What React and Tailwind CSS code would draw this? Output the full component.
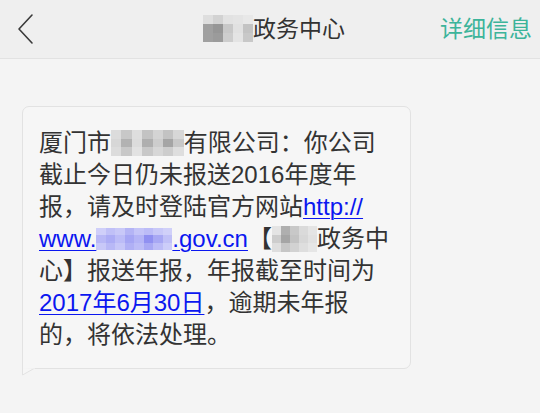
import React from "react";

const FONT = { fontFamily: '"Liberation Sans", "Noto Sans CJK SC", sans-serif' };

// pixelated blur blocks, the redacted parts of the message
function Mosaic({ cols, cell, colors, className = "" }) {
  return (
    <span
      className={`inline-grid align-middle ${className}`}
      style={{ gridTemplateColumns: `repeat(${cols}, ${cell[0]}px)`, gridAutoRows: `${cell[1]}px` }}
    >
      {colors.map((c, i) => (
        <span key={i} style={{ background: c }} />
      ))}
    </span>
  );
}

const g = (v) => `rgb(${v},${v},${v})`;

const titleBlur = [
  g(222), g(210), g(226), g(228), g(232),
  g(160), g(150), g(200), g(225), g(195),
  g(160), g(155), g(205), g(228), g(200),
];

const companyBlur = [
  g(220), g(200), g(222), g(195), g(212), g(195), g(215),
  g(215), g(178), g(220), g(175), g(205), g(165), g(200),
  g(220), g(200), g(226), g(200), g(215), g(205), g(222),
];

const urlBlur = [
  "#cfcff9", "#c0c0f7", "#c8c8f8", "#b4b4f5", "#c4c4f8", "#bcbcf7", "#c8c8f8", "#d0d0f9",
  "#b8b8f6", "#acacf5", "#bcbcf7", "#a6a6f4", "#b4b4f6", "#9090f1", "#a8a8f4", "#c0c0f7",
  "#c8c8f8", "#b8b8f6", "#c6c6f8", "#b0b0f5", "#bcbcf7", "#a8a8f4", "#bcbcf7", "#cccdf9",
];

const centerBlur = [
  g(228), g(175), g(200), g(218), g(228),
  g(205), g(165), g(195), g(215), g(225),
  g(222), g(198), g(210), g(222), g(230),
];

function Link({ children }) {
  return <span className="text-[#0b17f0] underline decoration-1 underline-offset-[3px]">{children}</span>;
}

export default function App() {
  return (
    <div className="min-h-[413px] w-[540px] bg-[#f4f4f4] text-[#333]" style={FONT}>
      <header className="grid h-[59px] grid-cols-[100px_1fr_120px] items-center border-b border-[#e2e2e2] bg-[#efefef]">
        <div className="pl-[16px]">
          <svg width="18" height="32" viewBox="0 0 18 32" fill="none">
            <path d="M16 2 L3 16 L16 30" stroke="#3a3a3a" strokeWidth="1.6" strokeLinecap="round" strokeLinejoin="round" />
          </svg>
        </div>
        <div className="flex items-center justify-center pl-[28px] text-[23px]">
          <Mosaic cols={5} cell={[10, 9]} colors={titleBlur} className="mb-[2px]" />
          <span>政务中心</span>
        </div>
        <div className="pr-[8px] text-right text-[23px] text-[#3cb49a]">详细信息</div>
      </header>

      <div className="relative ml-[22px] mt-[47px] w-[389px] rounded-[7px] rounded-bl-none border border-[#e2e2e2] bg-[#f6f6f6] pl-[16px] pr-[10px] pb-[17px] pt-[20px] text-[24px] leading-[32px]">
        <div className="whitespace-nowrap">
          厦门市<Mosaic cols={7} cell={[10.4, 8.5]} colors={companyBlur} className="mb-[3px]" />有限公司：你公司
        </div>
        <div className="whitespace-nowrap">截止今日仍未报送2016年度年</div>
        <div className="whitespace-nowrap">
          报，请及时登陆官方网站<Link>http://</Link>
        </div>
        <div className="whitespace-nowrap">
          <Link>
            www.<Mosaic cols={8} cell={[9.5, 7.5]} colors={urlBlur} className="mb-[3px]" />.gov.cn
          </Link>
          【<Mosaic cols={5} cell={[9, 8.5]} colors={centerBlur} className="mb-[3px]" />政务中
        </div>
        <div className="whitespace-nowrap">心】报送年报，年报截至时间为</div>
        <div className="whitespace-nowrap">
          <Link>2017年6月30日</Link>，逾期未年报
        </div>
        <div className="whitespace-nowrap">的，将依法处理。</div>

        <svg className="absolute left-[-1px] top-full" width="14" height="8" viewBox="0 0 14 8">
          <path d="M0.5 0 L0.5 7 L12 0.5" fill="#f6f6f6" stroke="#e2e2e2" strokeWidth="1" />
          <rect x="1" y="0" width="12" height="0.6" fill="#f6f6f6" />
        </svg>
      </div>
    </div>
  );
}
